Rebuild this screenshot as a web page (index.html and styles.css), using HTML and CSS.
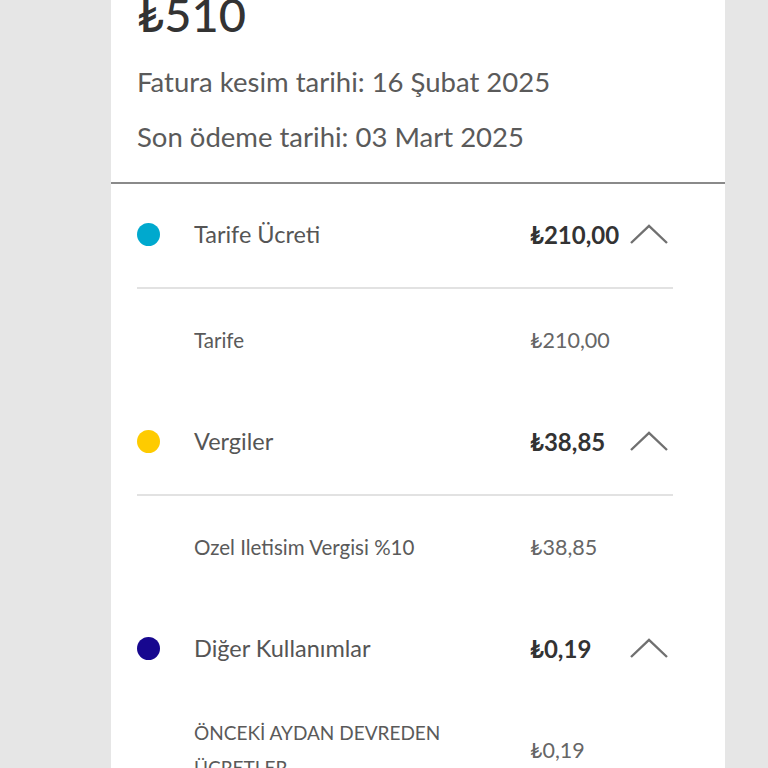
FILE: index.html
```html
<!DOCTYPE html>
<html lang="tr">

<head>
    <meta charset="UTF-8">
    <meta name="viewport" content="width=device-width, initial-scale=1.0">
    <title>Fatura Detayı</title>
    <link rel="stylesheet" href="styles.css">
</head>

<body>
    <div class="card">
        <div class="summary">
            <div class="total">₺510</div>
            <p class="date">Fatura kesim tarihi: 16 Şubat 2025</p>
            <p class="date">Son ödeme tarihi: 03 Mart 2025</p>
        </div>

        <div class="list">
            <div class="group">
                <div class="row head">
                    <span class="dot dot-blue"></span>
                    <span class="label">Tarife Ücreti</span>
                    <span class="amount">₺210,00</span>
                    <svg class="chevron" width="38" height="20" viewBox="0 0 38 20"><polyline points="1,19 19,2 37,19" /></svg>
                </div>
                <div class="line"></div>
                <div class="row sub">
                    <span></span>
                    <span class="label">Tarife</span>
                    <span class="amount">₺210,00</span>
                </div>
            </div>

            <div class="group">
                <div class="row head">
                    <span class="dot dot-yellow"></span>
                    <span class="label">Vergiler</span>
                    <span class="amount">₺38,85</span>
                    <svg class="chevron" width="38" height="20" viewBox="0 0 38 20"><polyline points="1,19 19,2 37,19" /></svg>
                </div>
                <div class="line"></div>
                <div class="row sub">
                    <span></span>
                    <span class="label">Ozel Iletisim Vergisi %10</span>
                    <span class="amount">₺38,85</span>
                </div>
            </div>

            <div class="group">
                <div class="row head">
                    <span class="dot dot-navy"></span>
                    <span class="label">Diğer Kullanımlar</span>
                    <span class="amount">₺0,19</span>
                    <svg class="chevron" width="38" height="20" viewBox="0 0 38 20"><polyline points="1,19 19,2 37,19" /></svg>
                </div>
                <div class="row sub tall">
                    <span></span>
                    <span class="label caps">ÖNCEKİ AYDAN DEVREDEN ÜCRETLER</span>
                    <span class="amount">₺0,19</span>
                </div>
            </div>
        </div>
    </div>
</body>

</html>
```
FILE: styles.css
```css
body {
    margin: 0;
    background-color: #e6e6e6;
    font-family: Lato, "Noto Sans", sans-serif;
    color: #555;
}

.card {
    width: 614px;
    margin: -16px 0 0 111px;
    background-color: #fff;
}

.summary {
    padding: 0 26px 18px;
    border-bottom: 2px solid #8a8a8a;
}

.total {
    font-size: 47px;
    font-weight: 500;
    color: #333;
    line-height: 60px;
    margin-bottom: 10px;
}

.date {
    margin: 0;
    font-size: 27.5px;
    line-height: 55px;
    color: #5a5a5a;
}

.list {
    padding: 0 52px 0 26px;
}

.row {
    display: grid;
    grid-template-columns: 57px 1fr 100px 43px;
    align-items: center;
}

.head {
    height: 100px;
}

.sub {
    height: 102px;
}

.sub.tall {
    height: auto;
    padding: 17px 0;
}

.dot {
    width: 23px;
    height: 23px;
    border-radius: 50%;
}

.dot-blue {
    background-color: #00a9ce;
}

.dot-yellow {
    background-color: #fecb00;
}

.dot-navy {
    background-color: #17078f;
}

.head .label {
    font-size: 23.5px;
    color: #555;
}

.head .amount {
    font-size: 24px;
    font-weight: 700;
    color: #333;
}

.sub .label {
    font-size: 20.5px;
    color: #5a5a5a;
    line-height: 35px;
}

.sub .label.caps {
    font-size: 19px;
    padding-right: 60px;
}

.sub .amount {
    font-size: 21.5px;
    color: #666;
}

.chevron polyline {
    fill: none;
    stroke: #707070;
    stroke-width: 2.4;
}

.line {
    height: 2px;
    margin-top: 3px;
    background-color: #e2e2e2;
}
```
